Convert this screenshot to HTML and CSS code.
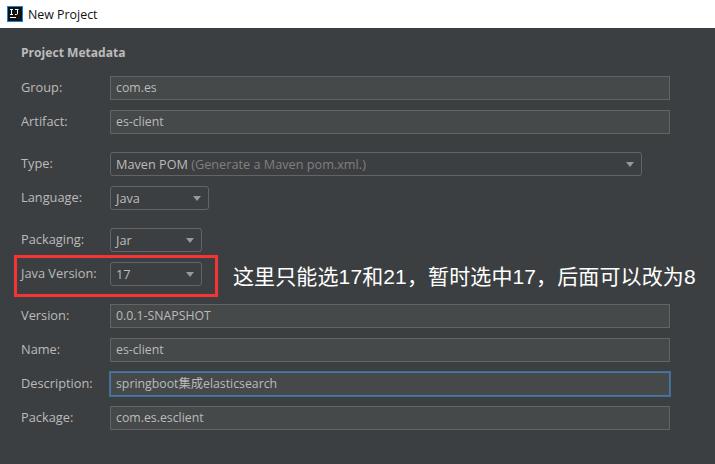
FILE: index.html
```html
<!DOCTYPE html>
<html lang="zh">
<head>
  <meta charset="UTF-8" />
  <title>New Project</title>
  <link rel="stylesheet" href="styles.css">
</head>
<body>
  <div class="title-bar">
    <svg class="app-icon" width="16" height="16" viewBox="0 0 16 16">
      <rect x="0.5" y="0.5" width="15" height="15" fill="#111" stroke="#1e7fe0"/>
      <rect x="3" y="11" width="6" height="1" fill="#fff"/>
      <path d="M3 3.5h3M4.5 3.5v5M3 8.5h3M8 3.5h3.5M10.5 3.5v4.2q0 .8-1 .8h-1.5" fill="none" stroke="#fff" stroke-width="1"/>
    </svg>
    <span class="window-title">New Project</span>
  </div>

  <div class="panel">
    <div class="heading">Project Metadata</div>

    <div class="group first-group">
      <div class="row"><label>Group:</label><div class="field">com.es</div></div>
      <div class="row"><label>Artifact:</label><div class="field">es-client</div></div>
    </div>

    <div class="group">
      <div class="row">
        <label>Type:</label>
        <div class="select type-select"><span>Maven POM <em>(Generate a Maven pom.xml.)</em></span><i class="arrow"></i></div>
      </div>
      <div class="row">
        <label>Language:</label>
        <div class="select lang-select"><span>Java</span><i class="arrow"></i></div>
      </div>
    </div>

    <div class="group">
      <div class="row">
        <label>Packaging:</label>
        <div class="select small-select"><span>Jar</span><i class="arrow"></i></div>
      </div>
      <div class="row">
        <label>Java Version:</label>
        <div class="select small-select"><span>17</span><i class="arrow"></i></div>
      </div>
    </div>

    <div class="group">
      <div class="row"><label>Version:</label><div class="field">0.0.1-SNAPSHOT</div></div>
      <div class="row"><label>Name:</label><div class="field">es-client</div></div>
      <div class="row"><label>Description:</label><div class="field focused">springboot集成elasticsearch</div></div>
      <div class="row"><label>Package:</label><div class="field">com.es.esclient</div></div>
    </div>
  </div>

  <!-- screenshot annotation on top of the dialog -->
  <div class="red-box"></div>
  <div class="note">这里只能选17和21，暂时选中17，后面可以改为8</div>
</body>
</html>
```

FILE: styles.css
```css
* {
  margin: 0;
  padding: 0;
  box-sizing: border-box;
}

html,
body {
  height: 100%;
  overflow: hidden;
}

body {
  position: relative;
  background-color: #3c3f41;
  font-family: 'Open Sans', 'Noto Sans CJK SC', sans-serif;
  font-size: 12.3px;
  color: #bbbbbb;
}

.title-bar {
  height: 28px;
  background-color: #fff;
  display: flex;
  align-items: center;
  padding-left: 7px;
  gap: 5px;
}

.window-title {
  color: #111;
  font-family: 'Open Sans', sans-serif;
  font-size: 12.4px;
}

.panel {
  padding: 17px 45px 0 21px;
}

.heading {
  font-weight: 700;
  font-size: 12.1px;
  line-height: 16px;
}

.group {
  display: flex;
  flex-direction: column;
  gap: 10px;
  margin-top: 18px;
}

.first-group {
  margin-top: 15px;
}

.row {
  display: flex;
  align-items: center;
  height: 24px;
}

label {
  width: 89px;
  flex-shrink: 0;
  font-size: 12.8px;
  line-height: 22px;
  margin-bottom: 2px;
}

.field {
  flex: 1;
  height: 24px;
  line-height: 22px;
  padding-left: 5px;
  background-color: #45494a;
  border: 1px solid #646464;
}

.focused {
  border-color: #4a78a5;
  box-shadow: 0 0 0 1px #426c96;
}

.select {
  height: 24px;
  display: flex;
  align-items: center;
  justify-content: space-between;
  padding: 0 7px 0 5px;
  border: 1px solid #646464;
  border-radius: 3px;
  font-size: 12.7px;
}

.select span {
  margin-bottom: 1px;
}

.select em {
  font-style: normal;
  color: #808080;
}

.type-select {
  width: 532px;
}

.lang-select {
  width: 99px;
}

.small-select {
  width: 92px;
}

.arrow {
  width: 0;
  height: 0;
  border-left: 4.5px solid transparent;
  border-right: 4.5px solid transparent;
  border-top: 5px solid #96999c;
}

/* annotation */
.red-box {
  position: absolute;
  left: 14px;
  top: 255px;
  width: 204px;
  height: 42px;
  border: 3px solid #f53535;
}

.note {
  position: absolute;
  left: 233px;
  top: 263px;
  color: #fff;
  font-family: 'Liberation Sans', 'Noto Sans CJK SC', sans-serif;
  font-size: 21px;
  letter-spacing: 0.12px;
  line-height: 28px;
  white-space: nowrap;
}
```
